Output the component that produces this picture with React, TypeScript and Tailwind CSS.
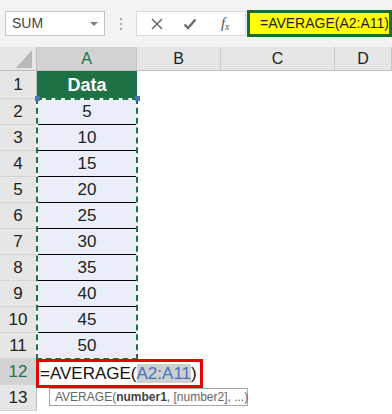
import React from 'react';

// Values in A2:A11
const values = [5, 10, 15, 20, 25, 30, 35, 40, 45, 50];

const colHeads = [
    { id: 'A', w: 'w-[100px]', active: true },
    { id: 'B', w: 'w-[84px]', active: false },
    { id: 'C', w: 'w-[114px]', active: false },
    { id: 'D', w: 'flex-1', active: false },
];

const App = () => {
    return (
        <div className="relative w-[392px] h-[414px] overflow-hidden bg-white font-['Liberation_Sans',Arial,sans-serif]">
            {/* --- Formula bar strip --- */}
            <div className="h-[47px] bg-[#f3f3f3] flex items-start pt-[11px]">
                {/* Name box */}
                <div className="ml-[5px] w-[101px] h-[25px] bg-white border border-[#c6c6c6] flex items-center pl-[6px] pr-[6px]">
                    <span className="text-[14px] text-[#444]">SUM</span>
                    <span className="ml-auto w-0 h-0 border-l-[4px] border-r-[4px] border-t-[4px] border-l-transparent border-r-transparent border-t-[#808080]"></span>
                </div>

                {/* grip dots */}
                <div className="w-[31px] h-[25px] flex flex-col items-center justify-center gap-[3px]">
                    <span className="w-[2px] h-[2px] bg-[#a8a8a8]"></span>
                    <span className="w-[2px] h-[2px] bg-[#a8a8a8]"></span>
                    <span className="w-[2px] h-[2px] bg-[#a8a8a8]"></span>
                </div>

                {/* Cancel / Enter / fx */}
                <div className="w-[111px] h-[25px] bg-white border border-[#dadada] flex items-center">
                    <svg className="ml-[14px]" width="12" height="12" viewBox="0 0 12 12">
                        <path d="M1 1 L11 11 M11 1 L1 11" stroke="#6b6b6b" strokeWidth="1.6" fill="none" />
                    </svg>
                    <svg className="ml-[20px]" width="14" height="12" viewBox="0 0 14 12">
                        <path d="M1.5 6.5 L5 10 L12.5 1.5" stroke="#6b6b6b" strokeWidth="2.4" fill="none" />
                    </svg>
                    <span className="ml-[24px] italic font-['Liberation_Serif',serif] text-[15px] text-[#555] leading-none">
                        f<span className="text-[10px] align-[-2px]">x</span>
                    </span>
                </div>

                {/* Formula content (highlighted) */}
                <div className="ml-[1px] -mt-[1px] w-[146px] h-[27px] border-[3px] border-[#1d6b34] bg-[#ffff00] flex items-center pl-[10px]">
                    <span className="text-[14px] text-[#222] whitespace-nowrap">=AVERAGE(A2:A11)</span>
                </div>
            </div>

            {/* --- Column headers --- */}
            <div className="h-[24px] flex bg-[#e6e6e6] border-b border-[#bdbdbd]">
                <div className="w-[37px] border-r border-[#bdbdbd] flex items-end justify-end pr-[4px] pb-[2px]">
                    <svg width="16" height="18" viewBox="0 0 16 18">
                        <polygon points="16,0 16,18 0,18" fill="#b8b8b8" />
                    </svg>
                </div>
                {colHeads.map((c) => (
                    <div
                        key={c.id}
                        className={`${c.w} border-r border-[#c8c8c8] flex items-center justify-center text-[16px] ${c.active ? 'bg-[#d2d2d2] text-[#217346]' : 'text-[#222]'}`}
                    >
                        {c.id}
                    </div>
                ))}
            </div>

            {/* --- Grid body --- */}
            <div className="flex">
                {/* Row headers */}
                <div className="w-[37px] flex flex-col bg-[#e6e6e6] border-r border-[#bdbdbd]">
                    {Array.from({ length: 13 }, (_, i) => i + 1).map((n) => (
                        <div
                            key={n}
                            className={`${n === 1 ? 'h-[28px]' : 'h-[26px]'} flex items-center justify-center text-[17px] border-b border-[#d4d4d4] ${n === 12 ? 'bg-[#d2d2d2] text-[#217346]' : 'text-[#222]'}`}
                        >
                            {n}
                        </div>
                    ))}
                </div>

                {/* Column A */}
                <div className="w-[100px] flex flex-col">
                    <div className="h-[28px] bg-[#1e7145] flex items-center justify-center text-white font-bold text-[18px]">
                        Data
                    </div>
                    {values.map((v) => (
                        <div key={v} className="h-[26px] bg-[#e9eef8] border-b border-black flex items-center justify-center text-[17px] text-[#222]">
                            {v}
                        </div>
                    ))}
                    <div className="h-[26px]"></div>
                    <div className="h-[26px]"></div>
                </div>

                <div className="flex-1"></div>
            </div>

            {/* Copy range marching ants around A2:A11 */}
            <div className="absolute left-[36px] top-[98px] w-[102px] h-[262px] border-2 border-white"></div>
            <div className="absolute left-[36px] top-[98px] w-[102px] h-[262px] border-2 border-dashed border-[#217346]"></div>
            <span className="absolute left-[35px] top-[96px] w-[5px] h-[5px] bg-[#4472c4]"></span>
            <span className="absolute left-[135px] top-[96px] w-[5px] h-[5px] bg-[#4472c4]"></span>

            {/* In-cell editor on A12 */}
            <div className="absolute left-[36px] top-[359px] w-[167px] h-[29px] border-[3px] border-[#e60000] bg-white flex items-center pl-[1px]">
                <span className="text-[17px] text-[#111] whitespace-nowrap leading-none">
                    =AVERAGE(<span className="bg-[#cfcfcf] text-[#4472c4]">A2:A11</span>)
                </span>
            </div>

            {/* Function tooltip */}
            <div className="absolute left-[49px] top-[388px] w-[199px] h-[18px] border border-[#a6a6a6] bg-white flex items-center pl-[5px]">
                <span className="text-[12px] text-[#666] whitespace-nowrap leading-none">
                    AVERAGE(<b className="text-[#444]">number1</b>, [number2], ...)
                </span>
            </div>
        </div>
    );
};

export default App;
